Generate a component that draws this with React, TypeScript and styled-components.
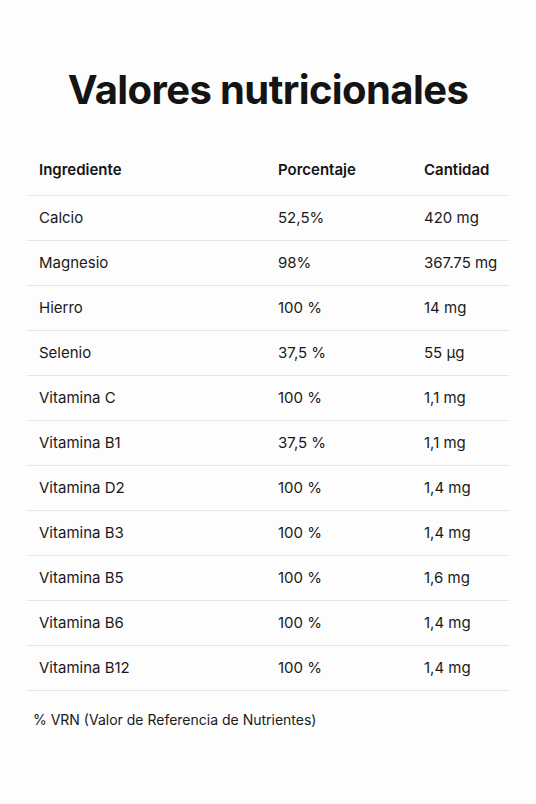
import React from "react";
import styled, { createGlobalStyle } from "styled-components";

const Global = createGlobalStyle`
  html, body { margin: 0; padding: 0; background: #fdfdfd; }
  body { font-family: Inter, "Noto Sans", sans-serif; color: #141414; }
`;

const Page = styled.div`
  padding: 65px 27px 40px;
`;

const Title = styled.h1`
  margin: 0 0 31px;
  text-align: center;
  font-size: 40px;
  line-height: 50px;
  font-weight: 700;
  letter-spacing: -0.6px;
  color: #141414;
`;

const Table = styled.table`
  width: 100%;
  border-collapse: collapse;
  table-layout: fixed;
  font-size: 15px;
`;

const Th = styled.th<{ $w?: string }>`
  width: ${(p) => p.$w ?? "auto"};
  text-align: left;
  font-weight: 600;
  padding: 15px 12px 16px;
  line-height: 18px;
  border-bottom: 1px solid #e4e4e4;
`;

const Td = styled.td`
  padding: 13px 12px 13px;
  line-height: 18px;
  border-bottom: 1px solid #e4e4e4;
  color: #1a1a1a;
  white-space: nowrap;
`;

const Note = styled.p`
  margin: 20px 0 0 6px;
  font-size: 14px;
  line-height: 18px;
  color: #1a1a1a;
`;

const rows: [string, string, string][] = [
  ["Calcio", "52,5%", "420 mg"],
  ["Magnesio", "98%", "367.75 mg"],
  ["Hierro", "100 %", "14 mg"],
  ["Selenio", "37,5 %", "55 µg"],
  ["Vitamina C", "100 %", "1,1 mg"],
  ["Vitamina B1", "37,5 %", "1,1 mg"],
  ["Vitamina D2", "100 %", "1,4 mg"],
  ["Vitamina B3", "100 %", "1,4 mg"],
  ["Vitamina B5", "100 %", "1,6 mg"],
  ["Vitamina B6", "100 %", "1,4 mg"],
  ["Vitamina B12", "100 %", "1,4 mg"],
];

export default function App() {
  return (
    <>
      <Global />
      <Page>
        <Title>Valores nutricionales</Title>
        <Table>
          <thead>
            <tr>
              <Th $w="215px">Ingrediente</Th>
              <Th $w="122px">Porcentaje</Th>
              <Th>Cantidad</Th>
            </tr>
          </thead>
          <tbody>
            {rows.map(([a, b, c]) => (
              <tr key={a}>
                <Td>{a}</Td>
                <Td>{b}</Td>
                <Td>{c}</Td>
              </tr>
            ))}
          </tbody>
        </Table>
        <Note>% VRN (Valor de Referencia de Nutrientes)</Note>
      </Page>
    </>
  );
}
